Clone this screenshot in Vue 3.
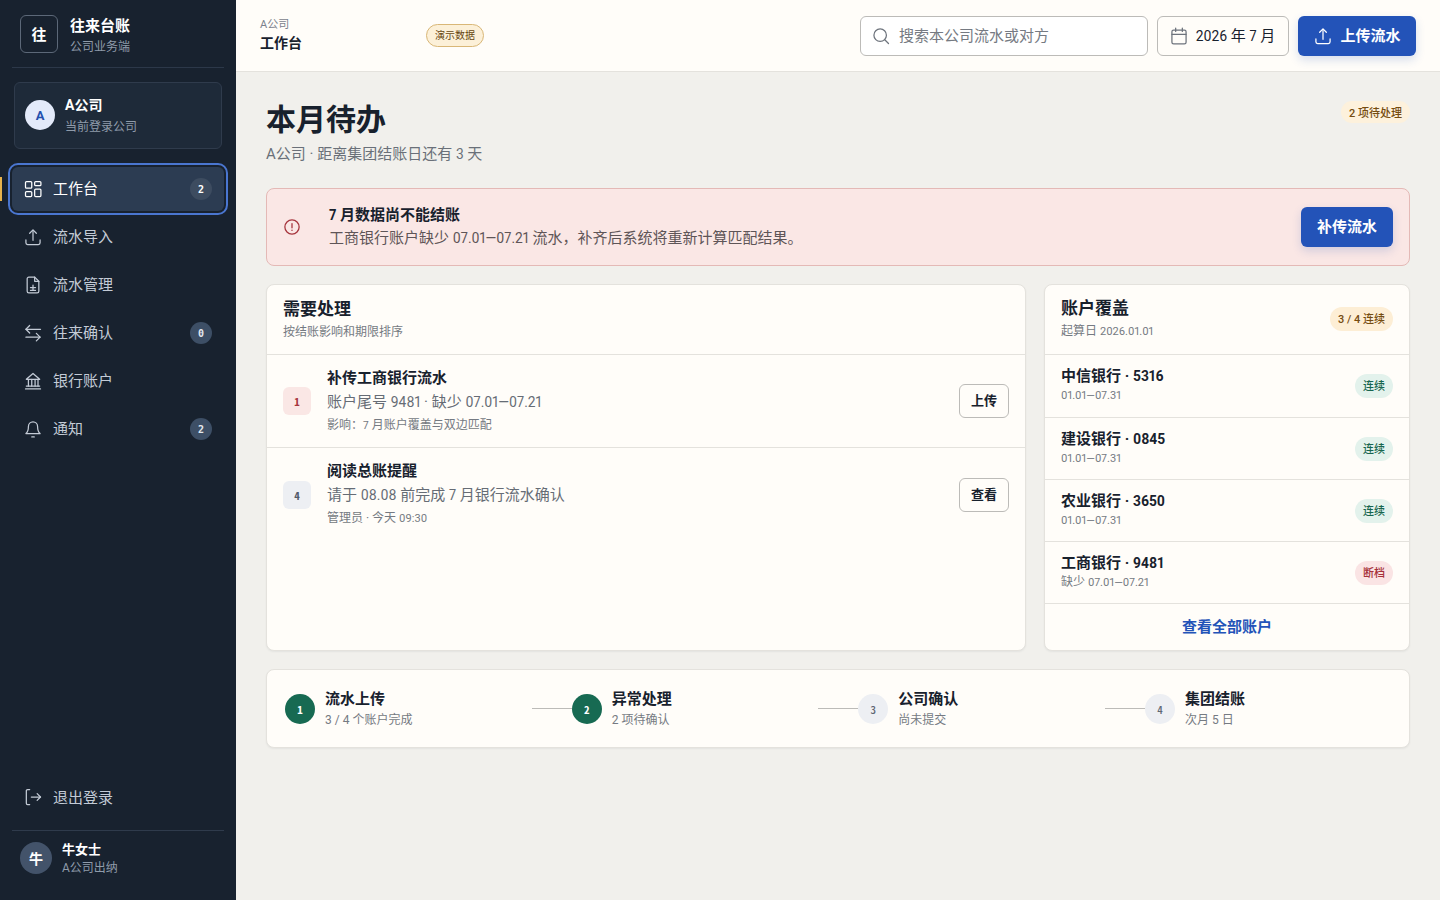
<template>
  <div class="app">
    <aside class="sidebar">
      <div class="brand">
        <div class="brand-mark">往</div>
        <div class="brand-text">
          <div class="brand-name">往来台账</div>
          <div class="brand-sub">公司业务端</div>
        </div>
      </div>

      <div class="company">
        <div class="company-avatar">A</div>
        <div>
          <div class="company-name">A公司</div>
          <div class="company-sub">当前登录公司</div>
        </div>
      </div>

      <nav class="nav">
        <a v-for="item in navItems" :key="item.label" class="nav-item" :class="{ active: item.active }">
          <svg class="nav-icon" viewBox="0 0 24 24" v-html="icons[item.icon]"></svg>
          <span class="nav-label">{{ item.label }}</span>
          <span v-if="item.count !== undefined" class="nav-count">{{ item.count }}</span>
        </a>
      </nav>

      <a class="nav-item logout">
        <svg class="nav-icon" viewBox="0 0 24 24" v-html="icons.logout"></svg>
        <span class="nav-label">退出登录</span>
      </a>

      <div class="user">
        <div class="user-avatar">牛</div>
        <div class="user-text">
          <div class="user-name">牛女士</div>
          <div class="user-role">A公司出纳</div>
        </div>
      </div>
    </aside>

    <div class="content">
      <header class="topbar">
        <div class="crumb">
          <div class="crumb-company">A公司</div>
          <div class="crumb-page">工作台</div>
        </div>
        <span class="demo-tag">演示数据</span>
        <div class="top-actions">
          <label class="search">
            <svg class="search-icon" viewBox="0 0 24 24" v-html="icons.search"></svg>
            <input type="text" placeholder="搜索本公司流水或对方" />
          </label>
          <button class="period">
            <svg class="period-icon" viewBox="0 0 24 24" v-html="icons.calendar"></svg>
            <span class="btn-text"><Txt text="2026 年 7 月" /></span>
          </button>
          <button class="primary upload">
            <svg class="upload-icon" viewBox="0 0 24 24" v-html="icons.upload"></svg>
            <span class="btn-text">上传流水</span>
          </button>
        </div>
      </header>

      <main class="main">
        <div class="page-head">
          <div>
            <h1>本月待办</h1>
            <p><Txt text="A公司 · 距离集团结账日还有 3 天" /></p>
          </div>
          <span class="pill amber head-pill"><Txt text="2 项待处理" /></span>
        </div>

        <section class="alert">
          <svg class="alert-icon" viewBox="0 0 24 24" v-html="icons.alert"></svg>
          <div class="alert-text">
            <div class="alert-title"><Txt text="7 月数据尚不能结账" /></div>
            <div class="alert-desc"><Txt text="工商银行账户缺少 07.01—07.21 流水，补齐后系统将重新计算匹配结果。" /></div>
          </div>
          <button class="primary alert-btn">补传流水</button>
        </section>

        <div class="columns">
          <section class="card">
            <div class="card-head">
              <div>
                <h2>需要处理</h2>
                <div class="card-sub">按结账影响和期限排序</div>
              </div>
            </div>
            <div v-for="task in tasks" :key="task.title" class="task">
              <div class="task-rank" :class="task.tone">{{ task.rank }}</div>
              <div class="task-body">
                <div class="task-title">{{ task.title }}</div>
                <div class="task-desc"><Txt :text="task.desc" /></div>
                <div class="task-note"><Txt :text="task.note" /></div>
              </div>
              <button class="ghost">{{ task.action }}</button>
            </div>
          </section>

          <section class="card accounts">
            <div class="card-head">
              <div>
                <h2>账户覆盖</h2>
                <div class="card-sub"><Txt text="起算日 2026.01.01" /></div>
              </div>
              <span class="pill amber"><Txt text="3 / 4 连续" /></span>
            </div>
            <div v-for="acc in accounts" :key="acc.name" class="account">
              <div class="account-text">
                <div class="account-name"><Txt :text="acc.name" /></div>
                <div class="account-range"><Txt :text="acc.range" /></div>
              </div>
              <span class="pill status" :class="acc.broken ? 'red' : 'green'">{{ acc.broken ? '断档' : '连续' }}</span>
            </div>
            <a class="all-link">查看全部账户</a>
          </section>
        </div>

        <section class="steps">
          <div v-for="(step, i) in steps" :key="step.title" class="step">
            <span v-if="i > 0" class="step-line"></span>
            <div class="step-num" :class="{ done: step.done }">{{ i + 1 }}</div>
            <div>
              <div class="step-title">{{ step.title }}</div>
              <div class="step-sub"><Txt :text="step.sub" /></div>
            </div>
          </div>
        </section>
      </main>
    </div>
  </div>
</template>

<script setup>
import { h } from 'vue'

// digits sit a little smaller than the CJK text around them
const Txt = (props) =>
  h('span', props.text.split(/(\d+(?: \/ \d+)?(?:[.:—]\d+)*)/).map((part, i) =>
    i % 2 ? h('span', { class: 'num' }, part) : part
  ))
Txt.props = ['text']

const icons = {
  grid: '<rect x="3" y="3" width="7.5" height="8" rx="1.2"/><rect x="14" y="3" width="7.5" height="5" rx="1.2"/><rect x="14" y="12" width="7.5" height="9" rx="1.2"/><rect x="3" y="15" width="7.5" height="6" rx="1.2"/>',
  upload: '<path d="M12 16V4"/><path d="M8 7.5 12 3.5l4 4"/><path d="M3.5 15.5V19a2 2 0 0 0 2 2h13a2 2 0 0 0 2-2v-3.5"/>',
  file: '<path d="M14 2.5H7a2 2 0 0 0-2 2v15a2 2 0 0 0 2 2h10a2 2 0 0 0 2-2V7.5z"/><path d="M14 2.5v5h5"/><path d="M9 15h6"/><path d="M12 12v6"/><path d="M9 18.5h6"/>',
  swap: '<path d="M21 7.5H3.5"/><path d="M8 3 3.5 7.5 8 12"/><path d="M3.5 17h17"/><path d="M16 12.5l4.5 4.5-4.5 4.5"/>',
  bank: '<path d="M4 10 12 3l8 7z"/><path d="M6.5 10v8"/><path d="M10.5 10v8"/><path d="M14.5 10v8"/><path d="M18 10v8"/><path d="M3 21.5h18"/><path d="M4 18h16"/>',
  bell: '<path d="M6.5 9a5.5 5.5 0 0 1 11 0c0 4.5 1 7 3 8.5h-17c2-1.5 3-4 3-8.5"/><path d="M10.5 21.5h3"/>',
  logout: '<path d="M8 3H5.5A1.5 1.5 0 0 0 4 4.5v15A1.5 1.5 0 0 0 5.5 21H8"/><path d="M10 12h11"/><path d="m17 8 4 4-4 4"/>',
  search: '<circle cx="11" cy="11" r="7.5"/><path d="m21 21-4.5-4.5"/>',
  calendar: '<rect x="3.5" y="5" width="17" height="16.5" rx="2"/><path d="M8 2.5v4"/><path d="M16 2.5v4"/><path d="M3.5 10h17"/>',
  alert: '<circle cx="12" cy="12" r="9.5"/><path d="M12 7.5v5.5"/><path d="M12 16.2v.3"/>'
}

const navItems = [
  { label: '工作台', icon: 'grid', count: 2, active: true },
  { label: '流水导入', icon: 'upload' },
  { label: '流水管理', icon: 'file' },
  { label: '往来确认', icon: 'swap', count: 0 },
  { label: '银行账户', icon: 'bank' },
  { label: '通知', icon: 'bell', count: 2 }
]

const tasks = [
  { rank: 1, tone: 'rank-red', title: '补传工商银行流水', desc: '账户尾号 9481 · 缺少 07.01—07.21', note: '影响：7 月账户覆盖与双边匹配', action: '上传' },
  { rank: 4, tone: 'rank-grey', title: '阅读总账提醒', desc: '请于 08.08 前完成 7 月银行流水确认', note: '管理员 · 今天 09:30', action: '查看' }
]

const accounts = [
  { name: '中信银行 · 5316', range: '01.01—07.31' },
  { name: '建设银行 · 0845', range: '01.01—07.31' },
  { name: '农业银行 · 3650', range: '01.01—07.31' },
  { name: '工商银行 · 9481', range: '缺少 07.01—07.21', broken: true }
]

const steps = [
  { title: '流水上传', sub: '3 / 4 个账户完成', done: true },
  { title: '异常处理', sub: '2 项待确认', done: true },
  { title: '公司确认', sub: '尚未提交' },
  { title: '集团结账', sub: '次月 5 日' }
]
</script>

<style>
html, body {
  margin: 0;
  background: #f1f0ec;
}

.num {
  font-family: Roboto, sans-serif;
  font-size: 0.92em;
  font-feature-settings: "pnum";
}

.amber .num,
.step-sub .num {
  font-size: 1em;
}
</style>

<style scoped>
.app {
  display: flex;
  min-height: 900px;
  font-family: Roboto, "Noto Sans CJK SC", sans-serif;
  color: #18212d;
}

.sidebar {
  width: 236px;
  flex-shrink: 0;
  height: 900px;
  box-sizing: border-box;
  background: #18222f;
  display: flex;
  flex-direction: column;
  padding: 0 12px;
  position: relative;
}

.brand {
  height: 68px;
  box-sizing: border-box;
  display: flex;
  align-items: center;
  gap: 12px;
  padding: 0 8px;
  border-bottom: 1px solid #2c3849;
}

.brand-mark {
  width: 38px;
  height: 38px;
  box-sizing: border-box;
  border: 1px solid #5c6878;
  border-radius: 6px;
  display: flex;
  align-items: center;
  justify-content: center;
  color: #fff;
  font-size: 15px;
  font-weight: 700;
}

.brand-text {
  padding-top: 4px;
}

.brand-name {
  color: #fff;
  font-size: 15px;
  font-weight: 700;
  line-height: 20px;
}

.brand-sub {
  color: #8f9baa;
  font-size: 12px;
  line-height: 18px;
  margin-top: 2px;
}

.company {
  margin: 14px 2px 0;
  height: 67px;
  box-sizing: border-box;
  border: 1px solid #2f3b4c;
  border-radius: 6px;
  background: #1e2a39;
  display: flex;
  align-items: center;
  gap: 10px;
  padding: 0 10px 1px;
}

.company-avatar {
  width: 30px;
  height: 30px;
  border-radius: 50%;
  background: #e3eafa;
  color: #2350ae;
  font-size: 13px;
  font-weight: 700;
  display: flex;
  align-items: center;
  justify-content: center;
}

.company-name {
  color: #fff;
  font-size: 14px;
  font-weight: 700;
  line-height: 20px;
}

.company-sub {
  color: #8f9baa;
  font-size: 12px;
  line-height: 18px;
  margin-top: 3px;
}

.nav {
  margin-top: 18px;
  display: flex;
  flex-direction: column;
  gap: 4px;
  flex: 1;
}

.nav-item {
  height: 44px;
  flex-shrink: 0;
  box-sizing: border-box;
  display: flex;
  align-items: center;
  gap: 10px;
  padding: 0 12px 0 11px;
  border-radius: 6px;
  color: #c3cbd6;
  font-size: 15px;
  position: relative;
}

.nav-item.active {
  background: #2c3c52;
  color: #fff;
  outline: 2px solid #4a76d0;
  outline-offset: 2px;
}

.nav-item.active::before {
  content: "";
  position: absolute;
  left: -12px;
  top: 10px;
  width: 2px;
  height: 24px;
  background: #e8b24a;
}

.nav-icon {
  width: 20px;
  height: 20px;
  fill: none;
  stroke: currentColor;
  stroke-width: 1.5;
  stroke-linecap: round;
  stroke-linejoin: round;
  flex-shrink: 0;
}

.nav-label {
  flex: 1;
  padding-bottom: 4px;
}

.nav-count {
  width: 22px;
  height: 22px;
  border-radius: 50%;
  background: #3d4f66;
  color: #e3e8ee;
  font-family: "DejaVu Sans Mono", monospace;
  font-size: 10px;
  font-weight: 700;
  display: flex;
  align-items: center;
  justify-content: center;
}

.active .nav-count {
  background: #3d4c60;
  color: #fff;
}

.logout {
  margin-bottom: 11px;
}

.logout .nav-label {
  padding-bottom: 2px;
}

.user {
  height: 70px;
  box-sizing: border-box;
  border-top: 1px solid #2f3b4c;
  display: flex;
  align-items: center;
  gap: 10px;
  padding: 0 8px 16px;
}

.user-avatar {
  width: 32px;
  height: 32px;
  border-radius: 50%;
  background: #43536a;
  color: #fff;
  font-size: 14px;
  font-weight: 700;
  display: flex;
  align-items: center;
  justify-content: center;
}

.user-text {
  padding-top: 2px;
}

.user-name {
  color: #fff;
  font-size: 13px;
  font-weight: 700;
  line-height: 18px;
}

.user-role {
  color: #8f9baa;
  font-size: 12px;
  line-height: 18px;
}

.content {
  flex: 1;
  min-width: 0;
  display: flex;
  flex-direction: column;
}

.topbar {
  height: 72px;
  box-sizing: border-box;
  background: #fffdf9;
  border-bottom: 1px solid #e4e2dd;
  display: flex;
  align-items: center;
  padding: 0 24px;
}

.crumb {
  width: 166px;
  padding-bottom: 2px;
}

.crumb-company {
  color: #7b828c;
  font-size: 11px;
  line-height: 16px;
}

.crumb-page {
  font-size: 14px;
  font-weight: 700;
  line-height: 20px;
}

.demo-tag {
  height: 23px;
  box-sizing: border-box;
  padding: 0 8px;
  border: 1px solid #d9b777;
  border-radius: 12px;
  background: #fcf0d8;
  color: #66450f;
  font-size: 10px;
  line-height: 21px;
}

.top-actions {
  margin-left: auto;
  display: flex;
  align-items: center;
  gap: 9px;
}

.search {
  width: 288px;
  height: 40px;
  box-sizing: border-box;
  display: flex;
  align-items: center;
  gap: 8px;
  padding: 0 10px;
  border: 1px solid #bcbbb8;
  border-radius: 6px;
  background: #fff;
}

.search-icon {
  width: 20px;
  height: 20px;
  fill: none;
  stroke: #6d737c;
  stroke-width: 1.5;
  stroke-linecap: round;
  flex-shrink: 0;
}

.search input {
  flex: 1;
  min-width: 0;
  border: 0;
  outline: 0;
  padding: 0;
  background: transparent;
  font: inherit;
  font-size: 15px;
  color: #18212d;
}

.search input::placeholder {
  color: #757a82;
}

.period {
  width: 132px;
  height: 40px;
  box-sizing: border-box;
  display: flex;
  align-items: center;
  justify-content: center;
  gap: 7px;
  padding: 0 2px 0 0;
  border: 1px solid #bcbbb8;
  border-radius: 6px;
  background: #fffdf9;
  color: #18212d;
  font-family: inherit;
  font-size: 15px;
}

.period-icon {
  width: 20px;
  height: 20px;
  fill: none;
  stroke: #6d737c;
  stroke-width: 1.5;
  stroke-linecap: round;
  flex-shrink: 0;
}

.btn-text {
  padding-bottom: 2px;
}

.primary {
  border: 0;
  border-radius: 6px;
  background: #2353b8;
  color: #fff;
  font-family: inherit;
  font-size: 15px;
  font-weight: 700;
  box-shadow: 0 4px 10px rgba(35, 83, 184, 0.18);
}

.upload {
  width: 118px;
  height: 40px;
  display: flex;
  align-items: center;
  justify-content: center;
  gap: 7px;
  padding: 0;
}

.upload-icon {
  width: 20px;
  height: 20px;
  fill: none;
  stroke: currentColor;
  stroke-width: 1.5;
  stroke-linecap: round;
  stroke-linejoin: round;
}

.main {
  padding: 27px 30px 0;
}

.page-head {
  display: flex;
  justify-content: space-between;
  align-items: flex-start;
}

h1 {
  margin: 1px 0 0;
  font-size: 30px;
  font-weight: 700;
  line-height: 40px;
}

.page-head p {
  margin: 4px 0 0;
  color: #6a7079;
  font-size: 15px;
  line-height: 20px;
}

.pill {
  display: inline-flex;
  align-items: center;
  height: 24px;
  box-sizing: border-box;
  padding: 0 8px 2px;
  border-radius: 12px;
  font-size: 11px;
  font-weight: 500;
  white-space: nowrap;
}

.amber {
  background: #fdeed5;
  color: #754c10;
}

.green {
  background: #e3f2ec;
  color: #17664f;
}

.red {
  background: #fae4e4;
  color: #a6313a;
}

.status {
  width: 38px;
  justify-content: center;
  padding: 0 0 2px;
}

.head-pill {
  background: #fdf1dc;
  height: 22px;
  margin-top: 2px;
  padding-bottom: 0;
}

.alert {
  margin-top: 24px;
  height: 78px;
  box-sizing: border-box;
  background: #fae7e5;
  border: 1px solid #e4b9b6;
  border-radius: 8px;
  display: flex;
  align-items: center;
  padding: 0 16px;
}

.alert-icon {
  width: 18px;
  height: 18px;
  fill: none;
  stroke: #a6353d;
  stroke-width: 1.7;
  stroke-linecap: round;
  margin-right: 28px;
  flex-shrink: 0;
}

.alert-text {
  flex: 1;
  padding-bottom: 1px;
}

.alert-title {
  font-size: 15px;
  font-weight: 700;
  line-height: 20px;
}

.alert-desc {
  color: #5e5557;
  font-size: 15px;
  line-height: 20px;
  margin-top: 3px;
}

.alert-btn {
  width: 92px;
  height: 40px;
  padding: 0 0 4px;
}

.columns {
  margin-top: 18px;
  display: grid;
  grid-template-columns: minmax(0, 1fr) 366px;
  gap: 18px;
}

.card {
  background: #fffdf9;
  border: 1px solid #e4e2dd;
  border-radius: 8px;
  box-shadow: 0 1px 2px rgba(24, 33, 45, 0.06);
  height: 367px;
  box-sizing: border-box;
  overflow: hidden;
}

.card-head {
  height: 70px;
  box-sizing: border-box;
  display: flex;
  align-items: center;
  justify-content: space-between;
  padding: 0 16px 2px;
  border-bottom: 1px solid #e4e2dd;
}

h2 {
  margin: 0;
  font-size: 17px;
  font-weight: 700;
  line-height: 22px;
}

.card-sub {
  color: #757a82;
  font-size: 12px;
  line-height: 16px;
  margin-top: 4px;
}

.task {
  height: 93px;
  box-sizing: border-box;
  display: flex;
  align-items: center;
  gap: 16px;
  padding: 0 16px;
  border-bottom: 1px solid #e4e2dd;
}

.task:last-child {
  border-bottom: 0;
}

.task-rank {
  width: 28px;
  height: 28px;
  border-radius: 6px;
  display: flex;
  align-items: center;
  justify-content: center;
  font-family: "Noto Sans CJK SC", sans-serif;
  font-feature-settings: "hwid";
  font-size: 11px;
  font-weight: 700;
  flex-shrink: 0;
}

.rank-red {
  background: #fae7e5;
  color: #a6353d;
}

.rank-grey {
  background: #edeff3;
  color: #525b69;
}

.task-body {
  flex: 1;
  min-width: 0;
}

.task-title {
  font-size: 15px;
  font-weight: 700;
  line-height: 20px;
}

.task-desc {
  color: #666c75;
  font-size: 15px;
  line-height: 22px;
  margin-top: 3px;
}

.task-note {
  color: #757a82;
  font-size: 12px;
  line-height: 18px;
  margin-top: 3px;
}

.ghost {
  width: 50px;
  height: 34px;
  padding: 0 0 3px;
  border: 1px solid #bcbbb8;
  border-radius: 6px;
  background: #fffdf9;
  color: #18212d;
  font-family: inherit;
  font-size: 13px;
  font-weight: 700;
}

.account {
  height: 62px;
  box-sizing: border-box;
  display: flex;
  align-items: center;
  justify-content: space-between;
  padding: 0 16px;
  border-bottom: 1px solid #e4e2dd;
}

.card-head + .account {
  height: 63px;
}

.account-text {
  padding-bottom: 2px;
}

.account-name {
  font-size: 15px;
  font-weight: 700;
  line-height: 20px;
}

.account-range {
  color: #757a82;
  font-size: 12px;
  line-height: 16px;
  margin-top: 1px;
}

.all-link {
  display: block;
  text-align: center;
  color: #2353b8;
  font-size: 15px;
  font-weight: 700;
  line-height: 46px;
}

.steps {
  margin-top: 18px;
  height: 79px;
  box-sizing: border-box;
  background: #fffdf9;
  border: 1px solid #e4e2dd;
  border-radius: 8px;
  box-shadow: 0 1px 2px rgba(24, 33, 45, 0.06);
  display: grid;
  grid-template-columns: repeat(3, 286.67px) 1fr;
  align-items: center;
  padding: 0 18px;
}

.step {
  display: flex;
  align-items: center;
  gap: 10px;
  position: relative;
}

.step-line {
  position: absolute;
  right: 100%;
  width: 40px;
  height: 1px;
  background: #bcbbb8;
}

.step-num {
  width: 30px;
  height: 30px;
  border-radius: 50%;
  background: #edeff3;
  color: #5f6773;
  font-family: "Noto Sans CJK SC", sans-serif;
  font-feature-settings: "hwid";
  font-size: 11px;
  font-weight: 500;
  display: flex;
  align-items: center;
  justify-content: center;
  flex-shrink: 0;
}

.step-num.done {
  background: #176a52;
  color: #fff;
  font-weight: 700;
}

.step-title {
  font-size: 15px;
  font-weight: 700;
  line-height: 20px;
}

.step-sub {
  color: #757a82;
  font-size: 12px;
  line-height: 16px;
  margin-top: 3px;
}
</style>
